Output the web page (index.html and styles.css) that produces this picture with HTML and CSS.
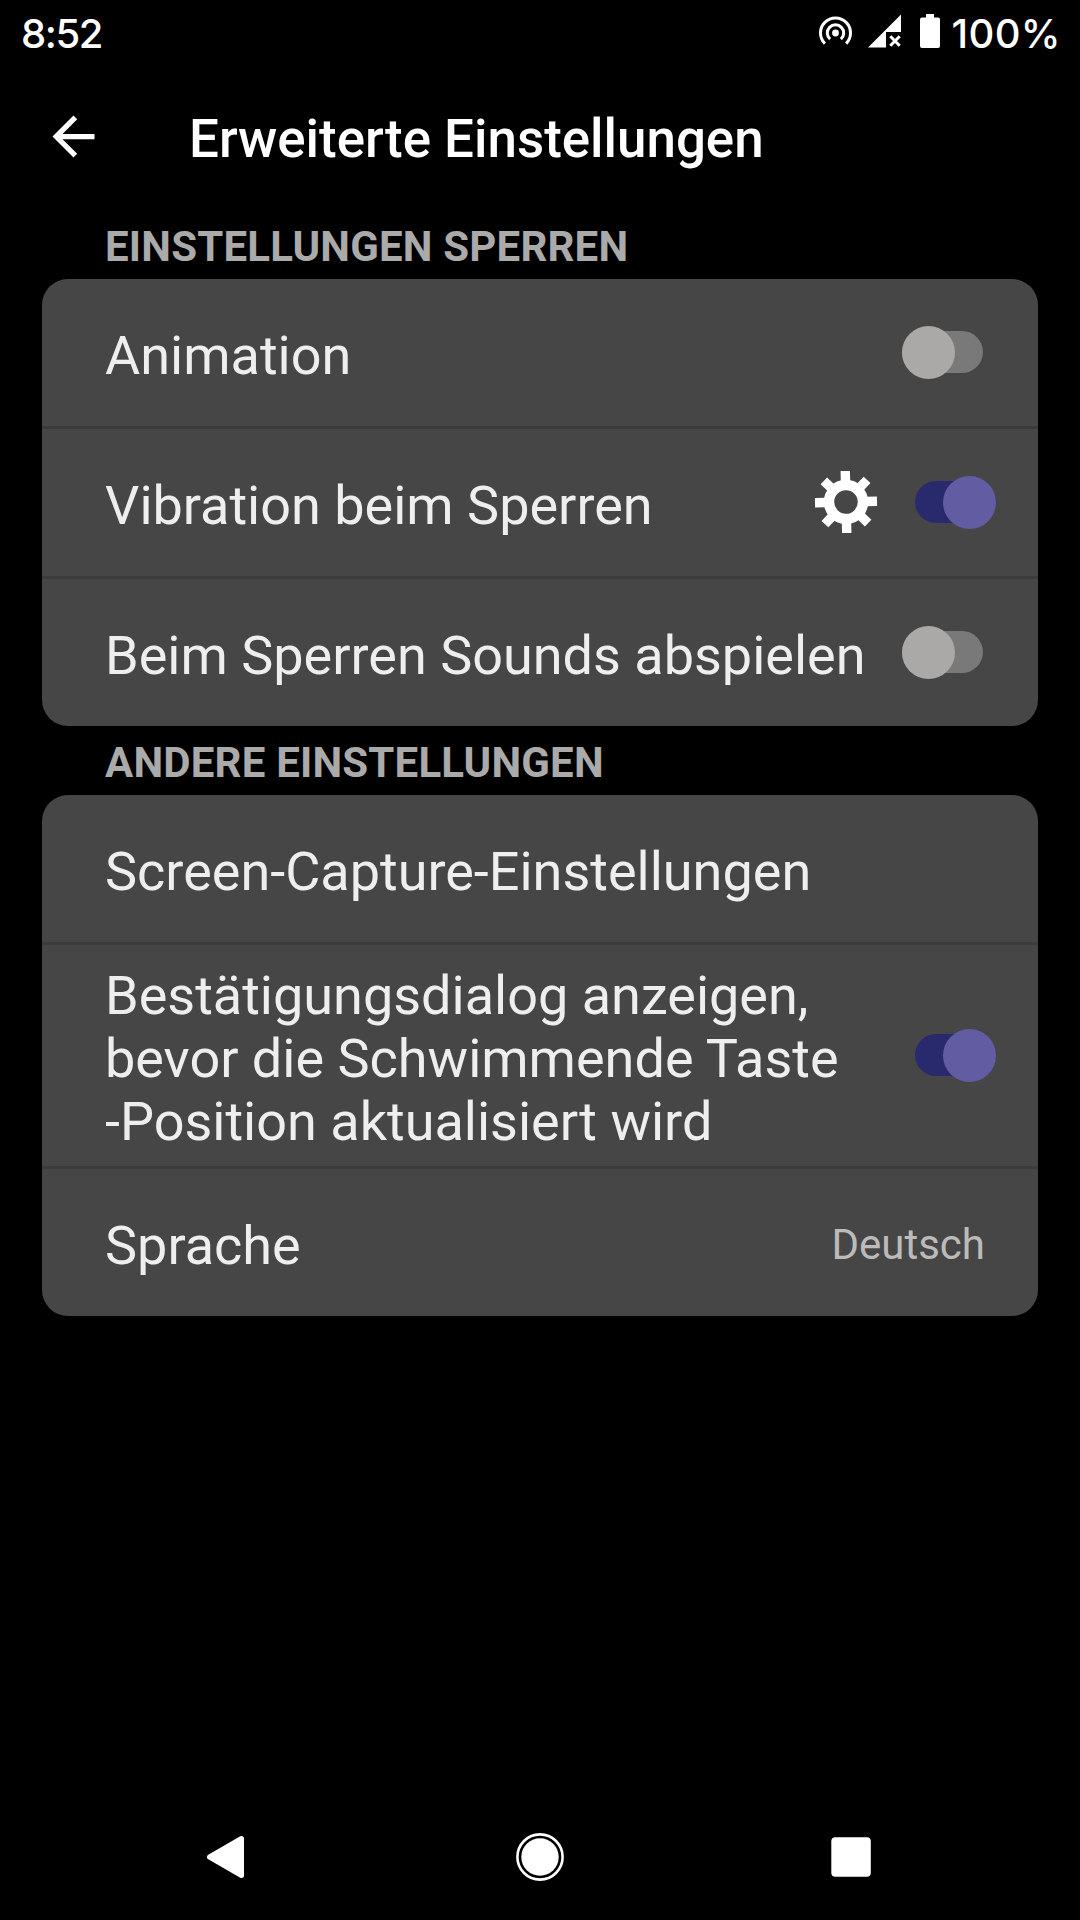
FILE: index.html
```html
<!DOCTYPE html>
<html lang="de">
<head>
    <meta charset="UTF-8">
    <meta name="viewport" content="width=device-width, initial-scale=1.0">
    <title>Erweiterte Einstellungen</title>
    <link rel="stylesheet" href="styles.css">
</head>
<body>
    <div class="status-bar">
        <span class="clock">8:52</span>
        <div class="status-icons">
            <svg class="hotspot" width="36" height="36" viewBox="0 0 36 36" fill="none" stroke="#fff" stroke-width="3">
                <circle cx="17.5" cy="18" r="3.4" fill="#fff" stroke="none"/>
                <path d="M12.1 24.2A8.2 8.2 0 1 1 22.9 24.2"/>
                <path d="M6.9 28.6A15 15 0 1 1 28.1 28.6"/>
            </svg>
            <svg class="signal" width="34" height="34" viewBox="0 0 34 34">
                <path d="M0 33.5L33 0.5V18H18V33.5Z" fill="#fff"/>
                <path d="M22.3 22.3l9.4 9.4M31.7 22.3l-9.4 9.4" stroke="#fff" stroke-width="3"/>
            </svg>
            <svg class="battery" width="20" height="34" viewBox="0 0 20 34" fill="#fff">
                <path d="M6 0h8v3.5h4a2 2 0 0 1 2 2V32a2 2 0 0 1-2 2H2a2 2 0 0 1-2-2V5.5a2 2 0 0 1 2-2h4z"/>
            </svg>
            <span class="percent">100%</span>
        </div>
    </div>

    <header class="toolbar">
        <svg class="back" width="63" height="63" viewBox="0 0 24 24" fill="#fff">
            <path d="M20 11H7.83l5.59-5.59L12 4l-8 8 8 8 1.41-1.41L7.83 13H20v-2z"/>
        </svg>
        <h1>Erweiterte Einstellungen</h1>
    </header>

    <main>
        <h2>EINSTELLUNGEN SPERREN</h2>
        <div class="card">
            <div class="row">
                <span class="label">Animation</span>
                <span class="switch"></span>
            </div>
            <div class="row">
                <span class="label">Vibration beim Sperren</span>
                <svg class="gear" width="64" height="64" viewBox="-32 -32 64 64">
                    <g transform="rotate(-1.4)">
                        <circle r="17" fill="none" stroke="#fff" stroke-width="10.4"/>
                        <path d="M0-31V-20M0 31V20M-31 0H-20M31 0H20M-21.6-21.6L-14-14M21.6-21.6L14-14M-21.6 21.6L-14 14M21.6 21.6L14 14" stroke="#fff" stroke-width="9.4"/>
                    </g>
                </svg>
                <span class="switch on"></span>
            </div>
            <div class="row">
                <span class="label">Beim Sperren Sounds abspielen</span>
                <span class="switch"></span>
            </div>
        </div>

        <h2>ANDERE EINSTELLUNGEN</h2>
        <div class="card">
            <div class="row">
                <span class="label">Screen-Capture-Einstellungen</span>
            </div>
            <div class="row tall">
                <span class="label">Bestätigungsdialog anzeigen,<br>bevor die Schwimmende Taste<br>-Position aktualisiert wird</span>
                <span class="switch on"></span>
            </div>
            <div class="row">
                <span class="label">Sprache</span>
                <span class="value">Deutsch</span>
            </div>
        </div>
    </main>

    <nav class="nav-bar">
        <svg width="60" height="60" viewBox="0 0 60 60">
            <path d="M13.5 30L45.5 11.5V48.5Z" fill="#fff" stroke="#fff" stroke-width="5" stroke-linejoin="round"/>
        </svg>
        <svg width="60" height="60" viewBox="0 0 60 60">
            <circle cx="31" cy="30" r="22.6" fill="none" stroke="#fff" stroke-width="2.6"/>
            <circle cx="31" cy="30" r="18.7" fill="#fff"/>
        </svg>
        <svg width="60" height="60" viewBox="0 0 60 60">
            <rect x="10.3" y="10.2" width="39.5" height="39.5" rx="4" fill="#fff"/>
        </svg>
    </nav>
</body>
</html>
```
FILE: styles.css
```css
* {
    box-sizing: border-box;
}
body {
    margin: 0;
    height: 1920px;
    display: flex;
    flex-direction: column;
    background: #000;
    color: #fff;
    font-family: Roboto, sans-serif;
    overflow: hidden;
}
svg {
    display: block;
    flex: none;
}

/* Status bar */
.status-bar {
    height: 63px;
    padding: 0 19px 0 21px;
    display: flex;
    justify-content: space-between;
    font-family: Inter, sans-serif;
    font-size: 40px;
    font-weight: 500;
    line-height: 67px;
}
.clock {
    letter-spacing: -1.4px;
}
.percent {
    letter-spacing: 0.4px;
}
.status-icons {
    display: flex;
}
.hotspot {
    margin: 15px 14px 0 0;
}
.signal {
    margin: 14px 18px 0 0;
}
.battery {
    margin: 14px 11px 0 0;
}

/* Toolbar */
.toolbar {
    height: 147px;
    padding-left: 42px;
    display: flex;
    align-items: center;
}
h1 {
    margin: 0 0 0 84px;
    padding-top: 5px;
    font-size: 52.9px;
    font-weight: 500;
    line-height: 63px;
}

/* Settings */
main {
    flex: 1;
    padding: 0 42px;
}
h2 {
    margin: 0;
    padding: 12px 63px 8px;
    color: #aaa;
    font-size: 42px;
    font-weight: 700;
    line-height: 49px;
    letter-spacing: 0.2px;
}
.card {
    background: #464646;
    border-radius: 26px;
}
.row {
    height: 147px;
    padding: 0 55px 0 63px;
    display: flex;
    align-items: center;
    box-sizing: content-box;
}
.row + .row {
    border-top: 3px solid #3b3b3b;
}
.tall {
    height: 221px;
}
.label {
    flex: 1;
    padding-top: 6px;
    color: #eee;
    font-size: 54px;
    line-height: 63px;
    white-space: nowrap;
}
.value {
    margin-right: -2px;
    padding-top: 4px;
    color: #bbb;
    font-size: 42px;
    line-height: 49px;
}
.gear {
    margin: -2px 37px 0 0;
}
.switch {
    flex: none;
    width: 81px;
    height: 42px;
    margin-top: -1px;
    border-radius: 21px;
    background: #797979;
    display: flex;
    align-items: center;
}
.switch::before {
    content: "";
    flex: none;
    width: 53px;
    height: 53px;
    border-radius: 50%;
    background: #aaa9a7;
}
.switch.on {
    justify-content: flex-end;
    margin-right: -13px;
    background: #292a6e;
}
.switch.on::before {
    background: #625ca3;
}

/* Navigation bar */
.nav-bar {
    height: 126px;
    padding: 0 199px 0 196px;
    display: flex;
    align-items: center;
    justify-content: space-between;
}
```
